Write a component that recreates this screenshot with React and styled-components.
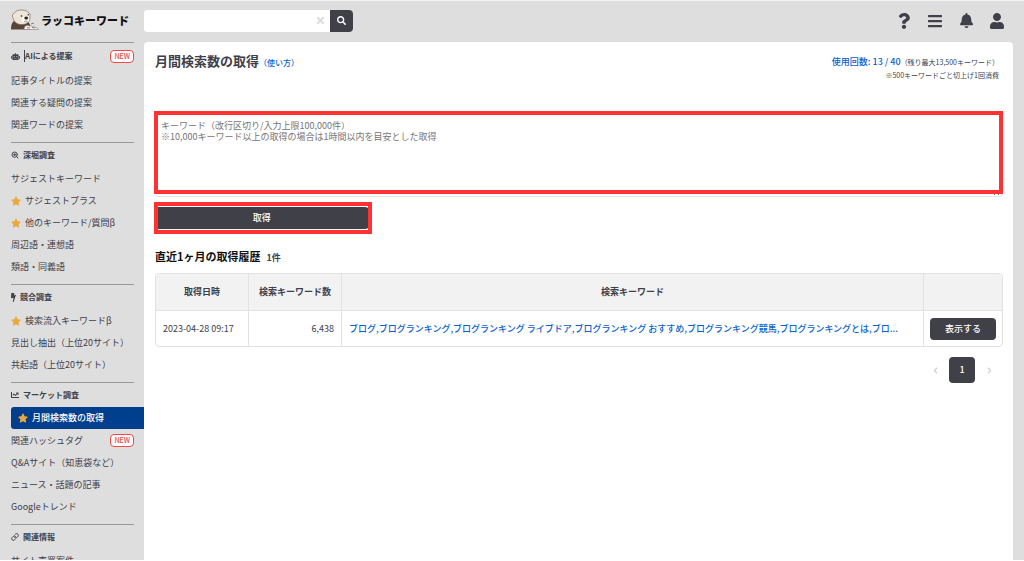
import React, { useState } from 'react';
import styled, { createGlobalStyle } from 'styled-components';
import {
    FaBars,
    FaBell,
    FaChartLine,
    FaChevronLeft,
    FaChevronRight,
    FaQuestion,
    FaRobot,
    FaSearch,
    FaStar,
    FaTimes,
    FaUser,
} from 'react-icons/fa';
import { FiLink, FiZoomIn } from 'react-icons/fi';

const GlobalStyle = createGlobalStyle`
    * {
        box-sizing: border-box;
    }
    body {
        margin: 0;
        background: #dedede;
        color: #40404a;
        font-family: "Noto Sans CJK JP", sans-serif;
        font-size: 9px;
        line-height: 14px;
    }
    button, input, textarea {
        font: inherit;
        color: inherit;
    }
    a {
        color: inherit;
        text-decoration: none;
    }
    svg {
        display: block;
        flex: none;
    }
`;

const PageStyle = styled.div`
    display: grid;
    grid-template-columns: 144px minmax(0, 1fr);
    height: 100vh;
    overflow: hidden;
    border-top: 1px solid #f2f2f2;
    border-bottom: 1px solid #fff;
`;

const SidebarStyle = styled.aside`
    padding: 0 10px 0 11px;
    overflow: hidden;
`;

const LogoStyle = styled.a`
    display: flex;
    align-items: center;
    gap: 2px;
    height: 41px;
    padding-bottom: 3px;
    color: #111;
    font-size: 11px;
    font-weight: 900;
    white-space: nowrap;
`;

const SectionStyle = styled.section`
    margin-bottom: 7px;
    border-top: 1px solid #999;
`;

const SectionTitle = styled.h2`
    display: flex;
    align-items: center;
    gap: 4px;
    height: ${(props) => (props.$tall ? 26 : 24)}px;
    margin: 0;
    font-size: 8px;
    font-weight: 700;
    white-space: nowrap;
`;

const SectionName = styled.span`
    ${(props) => props.$caret && `
        border-left: 1px solid #40404a;
        line-height: 12px;
    `}
`;

const MenuList = styled.ul`
    margin: 0;
    padding: 0;
    list-style: none;
`;

const MenuLink = styled.a`
    display: flex;
    align-items: center;
    gap: 4px;
    height: 22px;
    white-space: nowrap;
    ${(props) => (props.$active ? `
        margin-right: -10px;
        padding-left: 7px;
        border-radius: 3px 0 0 3px;
        background: #003f8e;
        color: #fff;
        font-weight: 500;
    ` : `
        padding-top: 1px;
    `)}
`;

const NewBadge = styled.span`
    margin-left: auto;
    padding: 0 3px;
    border: 1px solid #f04848;
    border-radius: 4px;
    background: #fff;
    color: #f04848;
    font-size: 7px;
    font-weight: 500;
    line-height: 11px;
`;

const MainStyle = styled.div`
    display: flex;
    flex-direction: column;
    padding-right: 11px;
`;

const TopBar = styled.header`
    display: flex;
    align-items: center;
    justify-content: space-between;
    height: 41px;
    padding: 0 8px 2px 0;
`;

const SearchForm = styled.form`
    display: flex;
    height: 22px;
    border-radius: 4px;
    overflow: hidden;
    background: #fff;
`;

const SearchInput = styled.input`
    width: 167px;
    padding: 0 6px;
    border: 0;
    outline: 0;
`;

const ClearButton = styled.button`
    display: grid;
    place-items: center;
    width: 19px;
    padding: 0;
    border: 0;
    background: #fff;
    color: #dcdcdc;
`;

const SearchButton = styled.button`
    display: grid;
    place-items: center;
    width: 23px;
    padding: 0;
    border: 0;
    background: #404048;
    color: #fff;
`;

const IconNav = styled.nav`
    display: flex;
    gap: 15px;
`;

const IconButton = styled.button`
    display: grid;
    place-items: center;
    width: 16px;
    height: 18px;
    padding: 0;
    border: 0;
    background: none;
`;

const Panel = styled.main`
    flex: 1;
    padding: 9px 10px 0 11px;
    border-radius: 4px 4px 0 0;
    background: #fff;
`;

const PanelHead = styled.div`
    display: flex;
    justify-content: space-between;
    height: 63px;
`;

const Title = styled.h1`
    margin: 0;
    font-size: 13px;
    font-weight: 700;
    line-height: 20px;
`;

const HelpLink = styled.a`
    color: #0a5fd0;
    font-size: 8px;
    font-weight: 500;
`;

const Usage = styled.div`
    padding: 4px 4px 0 0;
    font-size: 7px;
    line-height: 13px;
    text-align: right;

    a {
        color: #0a5fd0;
        font-size: 9px;
        font-weight: 500;
    }
`;

// red frame laid over a control
const Marked = styled.div`
    position: relative;
    width: ${(props) => props.$width || '100%'};

    &::after {
        content: "";
        position: absolute;
        inset: ${(props) => props.$inset};
        border: 4px solid #ff3131;
        pointer-events: none;
    }
`;

const KeywordArea = styled.textarea`
    display: block;
    width: 100%;
    height: 83px;
    padding: 5px 5px;
    border: 1px solid #e4e4e4;
    border-radius: 3px;
    outline: 0;
    line-height: 11px;

    &::placeholder {
        color: #757575;
    }
`;

const DarkButton = styled.button`
    display: block;
    width: 100%;
    height: 22px;
    padding: 0;
    border: 0;
    border-radius: 4px;
    background: #404048;
    color: #fff;
    font-weight: 500;
`;

const SubmitRow = styled.div`
    margin-top: 10px;
`;

const HistoryTitle = styled.h2`
    margin: 19px 0 7px;
    color: #111;
    font-size: 11px;
    font-weight: 700;
    line-height: 17px;

    span {
        margin-left: 6px;
        color: #40404a;
        font-size: 9px;
    }
`;

const HistoryTable = styled.table`
    width: 100%;
    table-layout: fixed;
    border: 1px solid #e2e2e2;
    border-radius: 4px;
    border-spacing: 0;
    overflow: hidden;

    th, td {
        height: 36px;
        padding: 0 7px;
        border-left: 1px solid #e2e2e2;
        white-space: nowrap;
    }
    th:first-child, td:first-child {
        border-left: 0;
    }
    th {
        background: #f2f2f2;
        font-weight: 700;
    }
    td {
        border-top: 1px solid #e2e2e2;
    }
    td:nth-child(2) {
        text-align: right;
    }
    td:last-child {
        padding: 0 6px;
    }
`;

const KeywordLink = styled.a`
    display: block;
    overflow: hidden;
    color: #0a5fd0;
    font-weight: 500;
    text-overflow: ellipsis;
`;

const Pagination = styled.nav`
    display: flex;
    justify-content: flex-end;
    margin-top: 10px;
`;

const PageButton = styled.button`
    display: grid;
    place-items: center;
    width: ${(props) => (props.$current ? 26 : 28)}px;
    height: 26px;
    padding: 0;
    border: 0;
    border-radius: 4px;
    background: ${(props) => (props.$current ? '#404048' : 'none')};
    color: ${(props) => (props.$current ? '#fff' : '#ccc')};
    font-weight: 500;
`;

const Flash = () => (
    <svg width="5" height="9" viewBox="0 0 5 9" fill="currentColor" aria-hidden="true">
        <path d="M.3 0h3L2.900 2.200 5 1.800 2.600 9H1.700l.8-4.200L0 5.300z" />
    </svg>
);

const sections = [
    {
        title: 'AIによる提案',
        icon: <FaRobot size={9} />,
        isNew: true,
        caret: true,
        items: [
            { name: '記事タイトルの提案' },
            { name: '関連する疑問の提案' },
            { name: '関連ワードの提案' },
        ],
    },
    {
        title: '深堀調査',
        icon: <FiZoomIn size={8} strokeWidth={3} />,
        items: [
            { name: 'サジェストキーワード' },
            { name: 'サジェストプラス', star: true },
            { name: '他のキーワード/質問β', star: true },
            { name: '周辺語・連想語' },
            { name: '類語・同義語' },
        ],
    },
    {
        title: '競合調査',
        icon: <Flash />,
        items: [
            { name: '検索流入キーワードβ', star: true },
            { name: '見出し抽出（上位20サイト）' },
            { name: '共起語（上位20サイト）' },
        ],
    },
    {
        title: 'マーケット調査',
        icon: <FaChartLine size={8} />,
        items: [
            { name: '月間検索数の取得', star: true, active: true },
            { name: '関連ハッシュタグ', isNew: true },
            { name: 'Q&Aサイト（知恵袋など）' },
            { name: 'ニュース・話題の記事' },
            { name: 'Googleトレンド' },
        ],
    },
    {
        title: '関連情報',
        icon: <FiLink size={8} strokeWidth={3} />,
        items: [{ name: 'サイト売買案件' }],
    },
];

const histories = [
    {
        date: '2023-04-28 09:17',
        count: '6,438',
        keywords: 'ブログ,ブログランキング,ブログランキング ライブドア,ブログランキング おすすめ,ブログランキング競馬,ブログランキングとは,ブロ...',
    },
];

const Otter = () => (
    <svg width="28" height="22" viewBox="0 0 28 22" aria-hidden="true">
        <path d="M0 20.500C0 15 1.500 12 5 11.500L16 12c2.500 1.500 3.500 4 4 8.500z" fill="#5a443a" />
        <path d="M2 9C.8 7 1.500 4.500 3.200 4.200 4.500 1.800 7.500.8 11 1c3.500.1 6 1.400 7 3.400 1.500.4 1.700 2.200.9 3.200.6 3.500-1.400 6.900-5.400 7.700C8.500 16.300 3.200 14.500 2 9z" fill="#eee5d9" stroke="#6b5d52" strokeWidth=".6" />
        <ellipse cx="14.500" cy="10.500" rx="3.600" ry="2.900" fill="#fffaf2" />
        <ellipse cx="15.200" cy="9" rx="1.900" ry="1.500" fill="#29211e" />
        <circle cx="10.500" cy="7" r=".8" fill="#29211e" />
        <circle cx="17.300" cy="5.800" r=".7" fill="#29211e" />
        <path d="M15 10.400v1.300m-2 .7q2 1.200 3.600-.3" fill="none" stroke="#6b5d52" strokeWidth=".6" />
        <path d="M13 20.500c0-2 1-4 3-4.200 1.500-.1 2 .8 3.500.8 1 0 1.500.6 3 .8 2 .2 4.500.8 5 2.600H13z" fill="#f4f2ef" stroke="#847b73" strokeWidth=".6" />
        <path d="M16 18.500l3 .5m1-4 3-1m-2 4.500 3 .5" fill="none" stroke="#5d5650" strokeWidth=".7" />
    </svg>
);

const Sidebar = () => (
    <SidebarStyle>
        <LogoStyle href="#">
            <Otter />
            ラッコキーワード
        </LogoStyle>
        {sections.map((section) => (
            <SectionStyle key={section.title}>
                <SectionTitle $tall={section.isNew}>
                    {section.icon}
                    <SectionName $caret={section.caret}>{section.title}</SectionName>
                    {section.isNew && <NewBadge>NEW</NewBadge>}
                </SectionTitle>
                <MenuList>
                    {section.items.map((item) => (
                        <li key={item.name}>
                            <MenuLink href="#" $active={item.active}>
                                {item.star && <FaStar size={10} color="#eaa93c" />}
                                {item.name}
                                {item.isNew && <NewBadge>NEW</NewBadge>}
                            </MenuLink>
                        </li>
                    ))}
                </MenuList>
            </SectionStyle>
        ))}
    </SidebarStyle>
);

const App = () => {
    const [search, setSearch] = useState('');
    const [keywords, setKeywords] = useState('');

    return (
        <>
            <GlobalStyle />
            <PageStyle>
                <Sidebar />
                <MainStyle>
                    <TopBar>
                        <SearchForm onSubmit={(e) => e.preventDefault()}>
                            <SearchInput
                                aria-label="キーワード検索"
                                value={search}
                                onChange={(e) => setSearch(e.target.value)}
                            />
                            <ClearButton type="button" aria-label="クリア" onClick={() => setSearch('')}>
                                <FaTimes size={11} />
                            </ClearButton>
                            <SearchButton aria-label="検索">
                                <FaSearch size={9} />
                            </SearchButton>
                        </SearchForm>
                        <IconNav>
                            <IconButton aria-label="ヘルプ"><FaQuestion size={16} /></IconButton>
                            <IconButton aria-label="メニュー"><FaBars size={16} /></IconButton>
                            <IconButton aria-label="お知らせ"><FaBell size={15} /></IconButton>
                            <IconButton aria-label="アカウント"><FaUser size={16} /></IconButton>
                        </IconNav>
                    </TopBar>
                    <Panel>
                        <PanelHead>
                            <Title>
                                月間検索数の取得
                                <HelpLink href="#">（使い方）</HelpLink>
                            </Title>
                            <Usage>
                                <a href="#">使用回数: 13 / 40</a>（残り最大13,500キーワード）
                                <br />
                                ※500キーワードごと切上げ1回消費
                            </Usage>
                        </PanelHead>
                        <Marked $inset="-3px 0 3px -1px">
                            <KeywordArea
                                aria-label="キーワード"
                                placeholder={'キーワード（改行区切り/入力上限100,000件）\n※10,000キーワード以上の取得の場合は1時間以内を目安とした取得'}
                                value={keywords}
                                onChange={(e) => setKeywords(e.target.value)}
                            />
                        </Marked>
                        <SubmitRow>
                            <Marked $width="25.2%" $inset="-5px -3px -5px -1px">
                                <DarkButton>取得</DarkButton>
                            </Marked>
                        </SubmitRow>
                        <HistoryTitle>
                            直近1ヶ月の取得履歴
                            <span>1件</span>
                        </HistoryTitle>
                        <HistoryTable>
                            <colgroup>
                                <col style={{ width: 92 }} />
                                <col style={{ width: 93 }} />
                                <col />
                                <col style={{ width: 79 }} />
                            </colgroup>
                            <thead>
                                <tr>
                                    <th>取得日時</th>
                                    <th>検索キーワード数</th>
                                    <th>検索キーワード</th>
                                    <th></th>
                                </tr>
                            </thead>
                            <tbody>
                                {histories.map((history) => (
                                    <tr key={history.date}>
                                        <td>{history.date}</td>
                                        <td>{history.count}</td>
                                        <td><KeywordLink href="#">{history.keywords}</KeywordLink></td>
                                        <td><DarkButton>表示する</DarkButton></td>
                                    </tr>
                                ))}
                            </tbody>
                        </HistoryTable>
                        <Pagination>
                            <PageButton aria-label="前へ"><FaChevronLeft size={7} /></PageButton>
                            <PageButton $current>1</PageButton>
                            <PageButton aria-label="次へ"><FaChevronRight size={7} /></PageButton>
                        </Pagination>
                    </Panel>
                </MainStyle>
            </PageStyle>
        </>
    );
};

export default App;
